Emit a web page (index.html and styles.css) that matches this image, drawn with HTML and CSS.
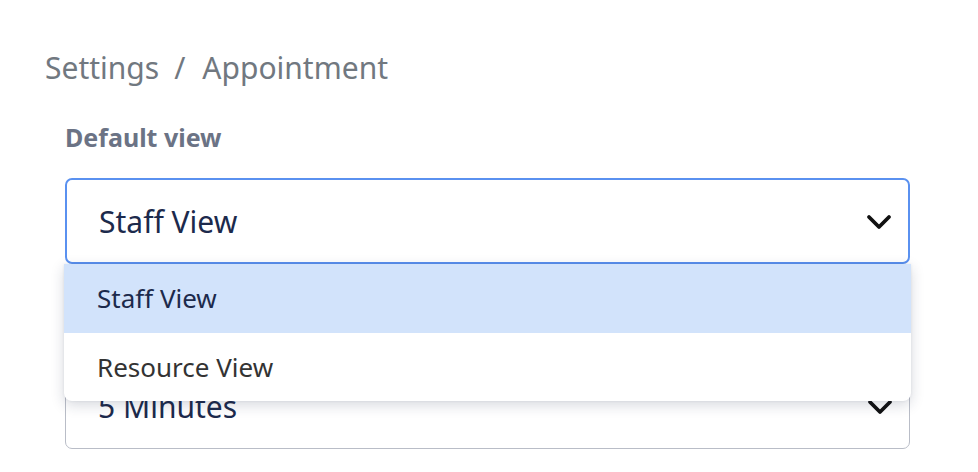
FILE: index.html
```html
<!DOCTYPE html>
<html>
<head>
<meta charset="utf-8">
<link rel="stylesheet" href="styles.css">
</head>
<body>
<div class="page">
  <nav class="breadcrumb">
    <span class="crumb">Settings</span>
    <span class="sep">/</span>
    <span class="crumb">Appointment</span>
  </nav>
  <div class="form">
    <div class="field">
      <label class="label">Default view</label>
      <div class="select-wrap">
        <div class="select active">
          <span class="value">Staff View</span>
          <svg class="chevron" viewBox="0 0 26 18" width="26" height="18"><path d="M3 4 L13 14 L23 4" fill="none" stroke="#111" stroke-width="3.8" stroke-linecap="round" stroke-linejoin="round"/></svg>
        </div>
        <ul class="menu">
          <li class="option selected">Staff View</li>
          <li class="option">Resource View</li>
        </ul>
      </div>
    </div>
    <div class="field">
      <label class="label">Time interval</label>
      <div class="select">
        <span class="value">5 Minutes</span>
        <svg class="chevron" viewBox="0 0 26 18" width="26" height="18"><path d="M3 4 L13 14 L23 4" fill="none" stroke="#111" stroke-width="3.8" stroke-linecap="round" stroke-linejoin="round"/></svg>
      </div>
    </div>
  </div>
</div>
</body>
</html>
```

FILE: styles.css
```css
* { box-sizing: border-box; }
html, body { margin: 0; padding: 0; background: #fff; }
body { font-family: "Noto Sans", "Open Sans", sans-serif; }
.page { padding: 46px 0 0 45px; width: 910px; }
.breadcrumb { display: flex; align-items: baseline; font-size: 30px; line-height: 44px; color: #717880; }
.sep { margin: 0 17px 0 15px; }
.form { padding-left: 20px; margin-top: 30px; display: flex; flex-direction: column; gap: 41px; }
.field { display: flex; flex-direction: column; }
.label { font-size: 25px; font-weight: 700; color: #6b7385; line-height: 34px; margin-bottom: 24px; }
.select-wrap { position: relative; }
.select { height: 86px; border: 1.5px solid #b9bdc7; border-radius: 7px; display: flex; align-items: center; justify-content: space-between; padding: 2px 16px 0 32px; background: #fff; }
.select.active { border: 2px solid #5a91f0; }
.value { font-size: 30px; color: #1c2a4c; margin-top: -2px; }
.chevron { display: block; }
.menu { position: absolute; left: -1px; right: -1px; top: 86px; margin: 0; padding: 0; list-style: none; background: #fff; border-radius: 0 0 8px 8px; box-shadow: 0 4px 14px rgba(30, 40, 70, 0.18), 0 0 3px rgba(30,40,70,0.08); overflow: hidden; z-index: 2; }
.option { height: 68.5px; display: flex; align-items: center; padding-left: 33px; font-size: 26px; color: #333; }
.option.selected { background: #d2e3fb; color: #1c2a4c; }
```
